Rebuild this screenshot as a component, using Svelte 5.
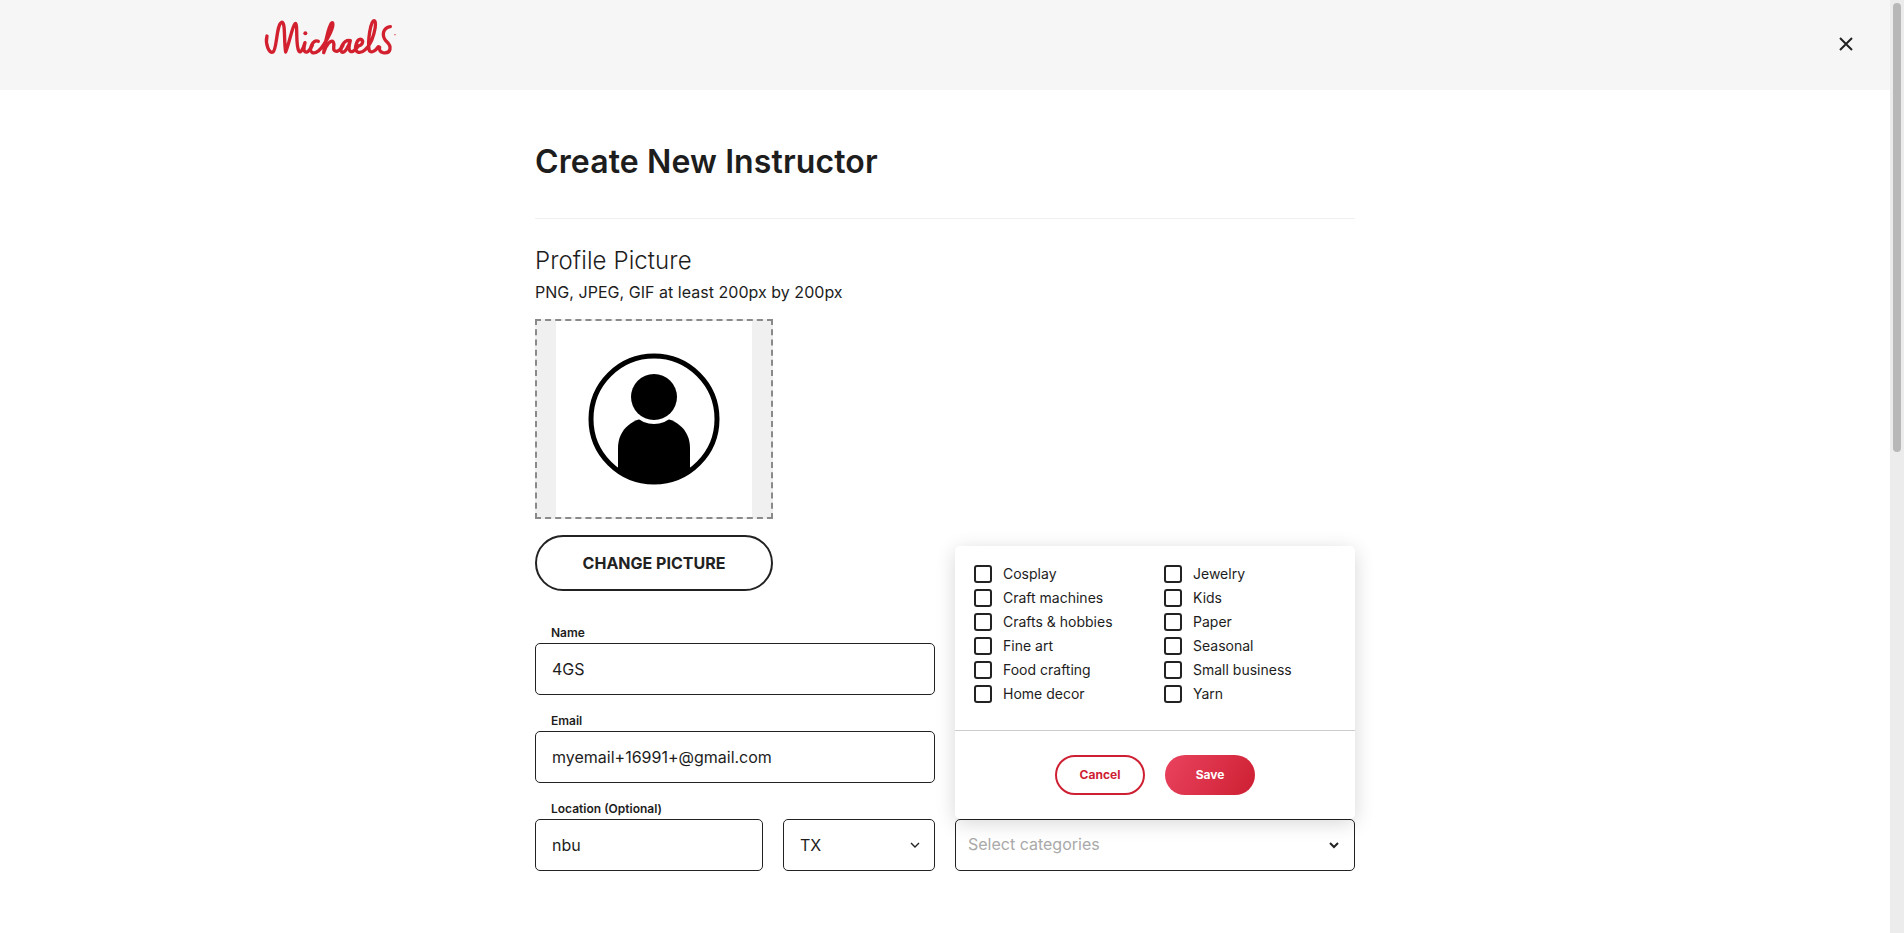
<script>
  let categories = [
    "Cosplay", "Craft machines", "Crafts & hobbies", "Fine art", "Food crafting", "Home decor",
    "Jewelry", "Kids", "Paper", "Seasonal", "Small business", "Yarn"
  ];
  let name = "4GS";
  let email = "myemail+16991+@gmail.com";
  let city = "nbu";
  let state = "TX";
</script>

<div class="shell">
  <div class="page">
    <header class="topbar">
      <svg class="logo" viewBox="0 0 432 162" role="img" aria-label="Michaels">
        <g fill="none" stroke="#d2202f" stroke-width="10" stroke-linecap="round" stroke-linejoin="round">
          <path d="M24 72 C18 95 30 126 42 120 C54 112 52 38 68 31 C80 28 74 85 80 120 C92 90 100 42 108 35 C118 30 108 100 120 118 C126 124 132 110 138 92 C134 108 132 122 144 120 C150 118 154 110 160 100" />
          <path d="M178 88 C160 80 148 116 160 122 C172 126 186 112 194 98 C206 80 226 44 221 33 C214 26 200 80 194 122 C202 96 216 82 223 90 C229 100 216 118 234 118 C242 116 248 108 252 100" />
          <path d="M274 86 C256 80 240 110 248 120 C256 126 270 102 274 86 C268 108 268 122 282 118 C290 114 294 108 298 102 C310 100 316 86 306 82 C294 80 282 112 296 120 C310 126 328 108 338 85 C348 60 354 28 345 26 C334 26 326 90 330 112 C332 124 346 122 358 104" />
          <path d="M394 44 C372 48 366 70 382 88 C400 104 396 126 372 122 C362 120 360 112 362 106" />
        </g>
        <circle cx="139" cy="64" r="6" fill="#d2202f" />
        <circle cx="408" cy="68" r="2" fill="#d2202f" />
      </svg>
      <button class="close" aria-label="Close">
        <svg viewBox="0 0 14 14" width="14" height="14">
          <path d="M1 1 L13 13 M13 1 L1 13" stroke="#222" stroke-width="2" fill="none" />
        </svg>
      </button>
    </header>

    <main class="content">
      <h1>Create New Instructor</h1>
      <hr />

      <h2>Profile Picture</h2>
      <p class="hint">PNG, JPEG, GIF at least 200px by 200px</p>

      <div class="picture">
        <div class="picture-inner">
          <svg viewBox="0 0 132 132" width="132" height="132" aria-hidden="true">
            <defs>
              <clipPath id="ring"><circle cx="66" cy="66" r="64" /></clipPath>
            </defs>
            <path clip-path="url(#ring)" d="M30 132 V95 C30 76 45 64 66 64 C87 64 102 76 102 95 V132 Z" fill="#000" />
            <circle cx="66" cy="66" r="63" fill="none" stroke="#000" stroke-width="5" />
            <circle cx="66" cy="44" r="27" fill="#fff" />
            <circle cx="66" cy="44" r="23" fill="#000" />
          </svg>
        </div>
      </div>

      <button class="change">CHANGE PICTURE</button>

      <div class="fields">
        <div class="col">
          <label class="field">
            <span>Name</span>
            <input type="text" value={name} />
          </label>
          <label class="field">
            <span>Email</span>
            <input type="text" value={email} />
          </label>
          <div class="field">
            <span>Location (Optional)</span>
            <div class="location">
              <input type="text" value={city} />
              <div class="select small">
                <span class="value">{state}</span>
                <svg viewBox="0 0 10 6" width="10" height="6"><path d="M1 1 L5 5 L9 1" fill="none" stroke="#222" stroke-width="1.4" /></svg>
              </div>
            </div>
          </div>
        </div>

        <div class="col right">
          <div class="category">
            <div class="popup">
              <div class="options">
                {#each categories as c}
                  <label class="option">
                    <input type="checkbox" />
                    <span>{c}</span>
                  </label>
                {/each}
              </div>
              <div class="actions">
                <button class="btn cancel">Cancel</button>
                <button class="btn save">Save</button>
              </div>
            </div>
            <div class="select">
              <span class="placeholder">Select categories</span>
              <svg viewBox="0 0 10 7" width="10" height="7"><path d="M1 1 L5 5 L9 1" fill="none" stroke="#222" stroke-width="2" /></svg>
            </div>
          </div>
        </div>
      </div>
    </main>
  </div>

  <div class="scrollbar"><div class="thumb"></div></div>
</div>

<style>
  :global(body) {
    margin: 0;
    background: #fff;
    overflow: hidden;
  }

  .shell {
    display: flex;
    height: 933px;
    overflow: hidden;
    font-family: Inter, "Liberation Sans", sans-serif;
    color: #1d1d1d;
  }

  .page {
    flex: 1;
    min-width: 0;
  }

  .scrollbar {
    width: 14px;
    background: #ececec;
    padding: 3px 3px 0;
    box-sizing: border-box;
  }

  .thumb {
    height: 449px;
    background: #b8b8b8;
    border-radius: 4px;
  }

  .topbar {
    height: 90px;
    background: #f6f6f6;
    display: flex;
    align-items: center;
    justify-content: space-between;
    padding: 0 37px 0 259px;
    box-sizing: border-box;
  }

  .logo {
    width: 144px;
    height: 54px;
    margin-top: -12px;
  }

  .close {
    all: unset;
    display: flex;
    margin-top: -2px;
  }

  .content {
    width: 820px;
    margin: 0 auto;
  }

  h1 {
    margin: 0;
    padding-top: 52px;
    font-size: 32px;
    line-height: 39px;
    font-weight: 600;
    letter-spacing: 0.12px;
  }

  hr {
    border: 0;
    border-top: 1px solid #f0f0f0;
    margin: 37px 0 0;
  }

  h2 {
    margin: 27px 0 0;
    font-size: 24px;
    line-height: 30px;
    font-weight: 300;
    letter-spacing: 0.1px;
  }

  .hint {
    margin: 4px 0 0;
    font-size: 16px;
    line-height: 24px;
    letter-spacing: 0.03px;
  }

  .picture {
    width: 238px;
    height: 200px;
    margin-top: 15px;
    box-sizing: border-box;
    border: 2px dashed #8a8a8a;
    background: #f0f0f0;
    display: flex;
    justify-content: center;
  }

  .picture-inner {
    width: 196px;
    background: #fff;
    display: flex;
    align-items: center;
    justify-content: center;
  }

  .change {
    all: unset;
    display: block;
    width: 238px;
    height: 56px;
    margin-top: 16px;
    box-sizing: border-box;
    border: 2px solid #222;
    border-radius: 28px;
    text-align: center;
    line-height: 53px;
    font-size: 16px;
    font-weight: 700;
    color: #222;
  }

  .fields {
    display: grid;
    grid-template-columns: 400px 400px;
    gap: 20px;
    margin-top: 35px;
  }

  .col {
    display: flex;
    flex-direction: column;
    gap: 19px;
  }

  .right {
    justify-content: flex-end;
  }

  .field {
    display: block;
  }

  .field > span {
    display: block;
    padding-left: 16px;
    height: 17px;
    font-size: 12px;
    line-height: 14px;
    font-weight: 600;
  }

  input[type="text"] {
    display: block;
    width: 100%;
    height: 52px;
    box-sizing: border-box;
    padding: 0 16px;
    border: 1px solid #222;
    border-radius: 5px;
    font: 400 16px Inter, "Liberation Sans", sans-serif;
    color: #1d1d1d;
    outline: none;
    background: #fff;
  }

  .location {
    display: grid;
    grid-template-columns: 228px 152px;
    gap: 20px;
  }

  .select {
    height: 52px;
    box-sizing: border-box;
    border: 1px solid #222;
    border-radius: 5px;
    padding: 0 15px 0 12px;
    display: flex;
    align-items: center;
    justify-content: space-between;
    font-size: 16px;
    background: #fff;
  }

  .select.small {
    padding: 0 14px 0 16px;
  }

  .placeholder {
    color: #a9a9a9;
    padding-bottom: 2px;
  }

  .category {
    position: relative;
  }

  .popup {
    position: absolute;
    left: 0;
    right: 0;
    bottom: 100%;
    background: #fff;
    border-radius: 5px;
    box-shadow: 0 4px 20px rgba(0, 0, 0, 0.16);
  }

  .options {
    display: grid;
    grid-template-rows: repeat(6, 24px);
    grid-auto-flow: column;
    grid-template-columns: 190px 1fr;
    padding: 16px 19px 24px;
    border-bottom: 1px solid #ccc;
  }

  .option {
    display: flex;
    align-items: center;
    gap: 11px;
    font-size: 14px;
  }

  .option span {
    padding-bottom: 2px;
  }

  input[type="checkbox"] {
    appearance: none;
    margin: 0;
    width: 18px;
    height: 18px;
    box-sizing: border-box;
    border: 2px solid #222;
    border-radius: 3px;
    background: #fff;
  }

  .actions {
    display: flex;
    justify-content: center;
    gap: 20px;
    padding: 24px 0;
  }

  .btn {
    all: unset;
    width: 90px;
    height: 40px;
    box-sizing: border-box;
    border-radius: 20px;
    text-align: center;
    font-size: 12px;
    font-weight: 700;
    line-height: 40px;
  }

  .cancel {
    border: 2px solid #cf2033;
    line-height: 36px;
    color: #cf2033;
  }

  .save {
    background: linear-gradient(120deg, #ea435f, #cd1f32);
    color: #fff;
  }
</style>
